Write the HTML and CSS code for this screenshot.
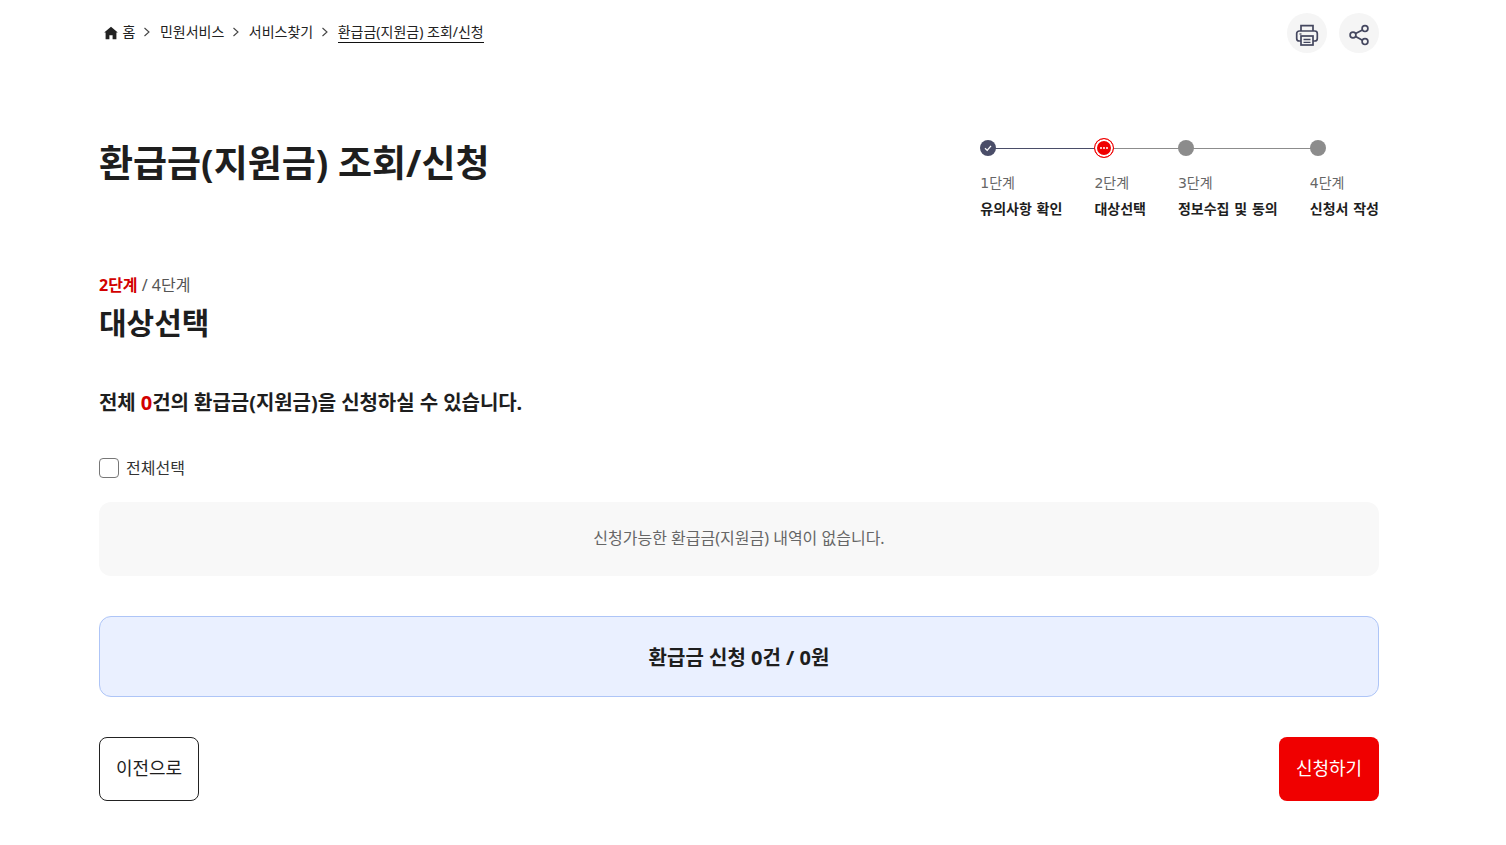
FILE: index.html
```html
<!DOCTYPE html>
<html lang="ko">
<head>
<meta charset="utf-8">
<title>환급금(지원금) 조회/신청</title>
<link rel="stylesheet" href="styles.css">
</head>
<body>
<div class="page">
  <header class="topbar">
    <nav class="crumbs">
      <svg class="home" viewBox="0 0 14 14" width="14" height="14"><path d="M7 .8 13.8 6.6H12.4V13.2H8.6V9.2H5.4V13.2H1.6V6.6H.2Z" fill="#222"/></svg>
      <span class="crumb">홈</span>
      <svg class="sep" viewBox="0 0 8 10" width="8" height="10"><path d="M1.5 1 6 5 1.5 9" fill="none" stroke="#444" stroke-width="1.1"/></svg>
      <span class="crumb">민원서비스</span>
      <svg class="sep" viewBox="0 0 8 10" width="8" height="10"><path d="M1.5 1 6 5 1.5 9" fill="none" stroke="#444" stroke-width="1.1"/></svg>
      <span class="crumb">서비스찾기</span>
      <svg class="sep" viewBox="0 0 8 10" width="8" height="10"><path d="M1.5 1 6 5 1.5 9" fill="none" stroke="#444" stroke-width="1.1"/></svg>
      <span class="crumb current">환급금(지원금) 조회/신청</span>
    </nav>
    <div class="tools">
      <button class="tool" aria-label="인쇄">
        <svg viewBox="0 0 24 24" width="24" height="24" fill="none" stroke="#44475f" stroke-width="1.7"><path d="M6 8V2.6H18V8"/><rect x="1.7" y="8" width="20.6" height="10" rx="2.5"/><rect x="6" y="13" width="12" height="9" fill="#f5f5f5"/><path d="M8.5 16.5H15.5M8.5 19.3H15.5" stroke-width="1.3"/><path d="M4.5 11H6.5" stroke-width="1.3"/></svg>
      </button>
      <button class="tool" aria-label="공유">
        <svg viewBox="0 0 24 24" width="24" height="24" fill="none" stroke="#44475f" stroke-width="1.7"><circle cx="18" cy="5.6" r="2.9"/><circle cx="6" cy="12" r="2.9"/><circle cx="18" cy="18.6" r="2.9"/><path d="M8.6 10.6 15.4 7M8.6 13.4 15.4 17.2"/></svg>
      </button>
    </div>
  </header>

  <section class="head">
    <h1 class="title">환급금(지원금) 조회/신청</h1>
    <ol class="steps">
      <li class="step done">
        <span class="dot-row"><span class="dot"><svg viewBox="0 0 10 10" width="10" height="10"><path d="M2 5.2 4.2 7.4 8 2.8" fill="none" stroke="#fff" stroke-width="1.3"/></svg></span></span>
        <span class="num">1단계</span>
        <strong class="name">유의사항 확인</strong>
      </li>
      <li class="step active">
        <span class="dot-row"><span class="dot"><i></i><i></i><i></i></span></span>
        <span class="num">2단계</span>
        <strong class="name">대상선택</strong>
      </li>
      <li class="step">
        <span class="dot-row"><span class="dot"></span></span>
        <span class="num">3단계</span>
        <strong class="name">정보수집 및 동의</strong>
      </li>
      <li class="step last">
        <span class="dot-row"><span class="dot"></span></span>
        <span class="num">4단계</span>
        <strong class="name">신청서 작성</strong>
      </li>
    </ol>
  </section>

  <p class="stage"><b>2단계</b> / 4단계</p>
  <h2 class="subtitle">대상선택</h2>
  <p class="summary">전체 <em>0</em>건의 환급금(지원금)을 신청하실 수 있습니다.</p>

  <label class="check"><span class="box"></span><span>전체선택</span></label>

  <div class="empty">신청가능한 환급금(지원금) 내역이 없습니다.</div>
  <div class="total">환급금 신청 0건 / 0원</div>

  <div class="actions">
    <button class="btn prev">이전으로</button>
    <button class="btn apply">신청하기</button>
  </div>
</div>
</body>
</html>
```

FILE: styles.css
```css
* { box-sizing: border-box; }
html, body { margin: 0; padding: 0; background: #fff; }
body {
  padding-top: 13px;
  font-family: "Noto Sans", "Noto Sans CJK KR", sans-serif;
  color: #1e1e1e;
  overflow-x: hidden;
}
.page { width: 1280px; margin-left: 99px; }

.topbar {
  display: flex;
  justify-content: space-between;
  align-items: center;
  height: 40px;
}
.crumbs {
  display: flex;
  align-items: center;
  padding-left: 5px;
  padding-bottom: 2px;
  font-size: 14px;
  line-height: 20px;
  color: #222;
}
.home { margin-right: 4.5px; margin-top: 1px; }
.sep { margin: 0 8.5px 0 8px; }
.current { border-bottom: 1px solid #111; padding-top: 1px; }
.tools { display: flex; gap: 12px; }
.tool {
  width: 40px;
  height: 40px;
  border: 0;
  border-radius: 50%;
  background: #f5f5f5;
  padding: 4px 0 0;
  display: flex;
  align-items: center;
  justify-content: center;
}

.head {
  display: flex;
  justify-content: space-between;
  align-items: flex-start;
  margin-top: 62px;
}
.title {
  margin: 20px 0 0;
  font-size: 37px;
  line-height: 56px;
  font-weight: 700;
  color: #1e1e1e;
}
.steps {
  list-style: none;
  display: flex;
  gap: 32px;
  margin: 0;
  padding: 23px 0 0;
}
.step { display: flex; flex-direction: column; }
.dot-row {
  position: relative;
  height: 20px;
  display: flex;
  align-items: center;
  margin-bottom: 13px;
}
.step:not(.last) .dot-row::after {
  content: "";
  position: absolute;
  left: 8px;
  right: -40px;
  top: 10px;
  height: 1px;
  background: #8c8c8c;
}
.step.done .dot-row::after { background: #4a4d68; }
.dot {
  position: relative;
  z-index: 1;
  width: 16px;
  height: 16px;
  border-radius: 50%;
  background: #8c8c8c;
  display: flex;
  align-items: center;
  justify-content: center;
  gap: 1px;
}
.done .dot { background: #4a4d68; }
.active .dot {
  width: 20px;
  height: 20px;
  background: #f00000;
  border: 1px solid #f00000;
  box-shadow: inset 0 0 0 2px #fff;
}
.active .dot i { width: 2px; height: 2px; border-radius: 50%; background: #fff; }
.num {
  font-family: "DejaVu Sans", "Noto Sans CJK KR", sans-serif;
  font-size: 14px;
  line-height: 24px;
  color: #666;
}
.name {
  margin-top: 2px;
  font-size: 14px;
  line-height: 24px;
  font-weight: 700;
  word-spacing: 1.2px;
  white-space: nowrap;
  color: #1e1e1e;
}

.stage {
  margin: 52px 0 0;
  font-size: 16px;
  line-height: 24px;
  color: #555;
}
.stage b { color: #d20000; font-weight: 700; }
.subtitle {
  margin: 5px 0 0;
  font-size: 30px;
  line-height: 42px;
  font-weight: 700;
}
.summary {
  margin: 43px 0 0;
  font-size: 20px;
  line-height: 32px;
  font-weight: 700;
  letter-spacing: -0.05px;
}
.summary em { font-style: normal; color: #d20000; }

.check {
  display: flex;
  align-items: center;
  gap: 7px;
  margin-top: 37px;
  font-size: 16px;
  line-height: 24px;
  color: #333;
}
.box {
  width: 20px;
  height: 20px;
  border: 1px solid #777;
  border-radius: 4px;
  background: #fff;
}
.empty {
  margin-top: 22px;
  height: 74px;
  padding-bottom: 4px;
  background: #f8f8f8;
  border-radius: 12px;
  display: flex;
  align-items: center;
  justify-content: center;
  font-size: 16px;
  color: #666;
}
.total {
  margin-top: 40px;
  height: 81px;
  background: #eaf0ff;
  border: 1px solid #aec5f7;
  border-radius: 12px;
  display: flex;
  align-items: center;
  justify-content: center;
  font-size: 20px;
  font-weight: 700;
  color: #1e1e1e;
}
.actions {
  display: flex;
  justify-content: space-between;
  margin-top: 40px;
}
.btn {
  width: 100px;
  height: 64px;
  padding: 0 0 4px;
  border-radius: 8px;
  font-family: inherit;
  font-size: 18px;
}
.prev { background: #fff; border: 1px solid #222; color: #1e1e1e; }
.apply { background: #f00000; border: 0; color: #fff; }
```
